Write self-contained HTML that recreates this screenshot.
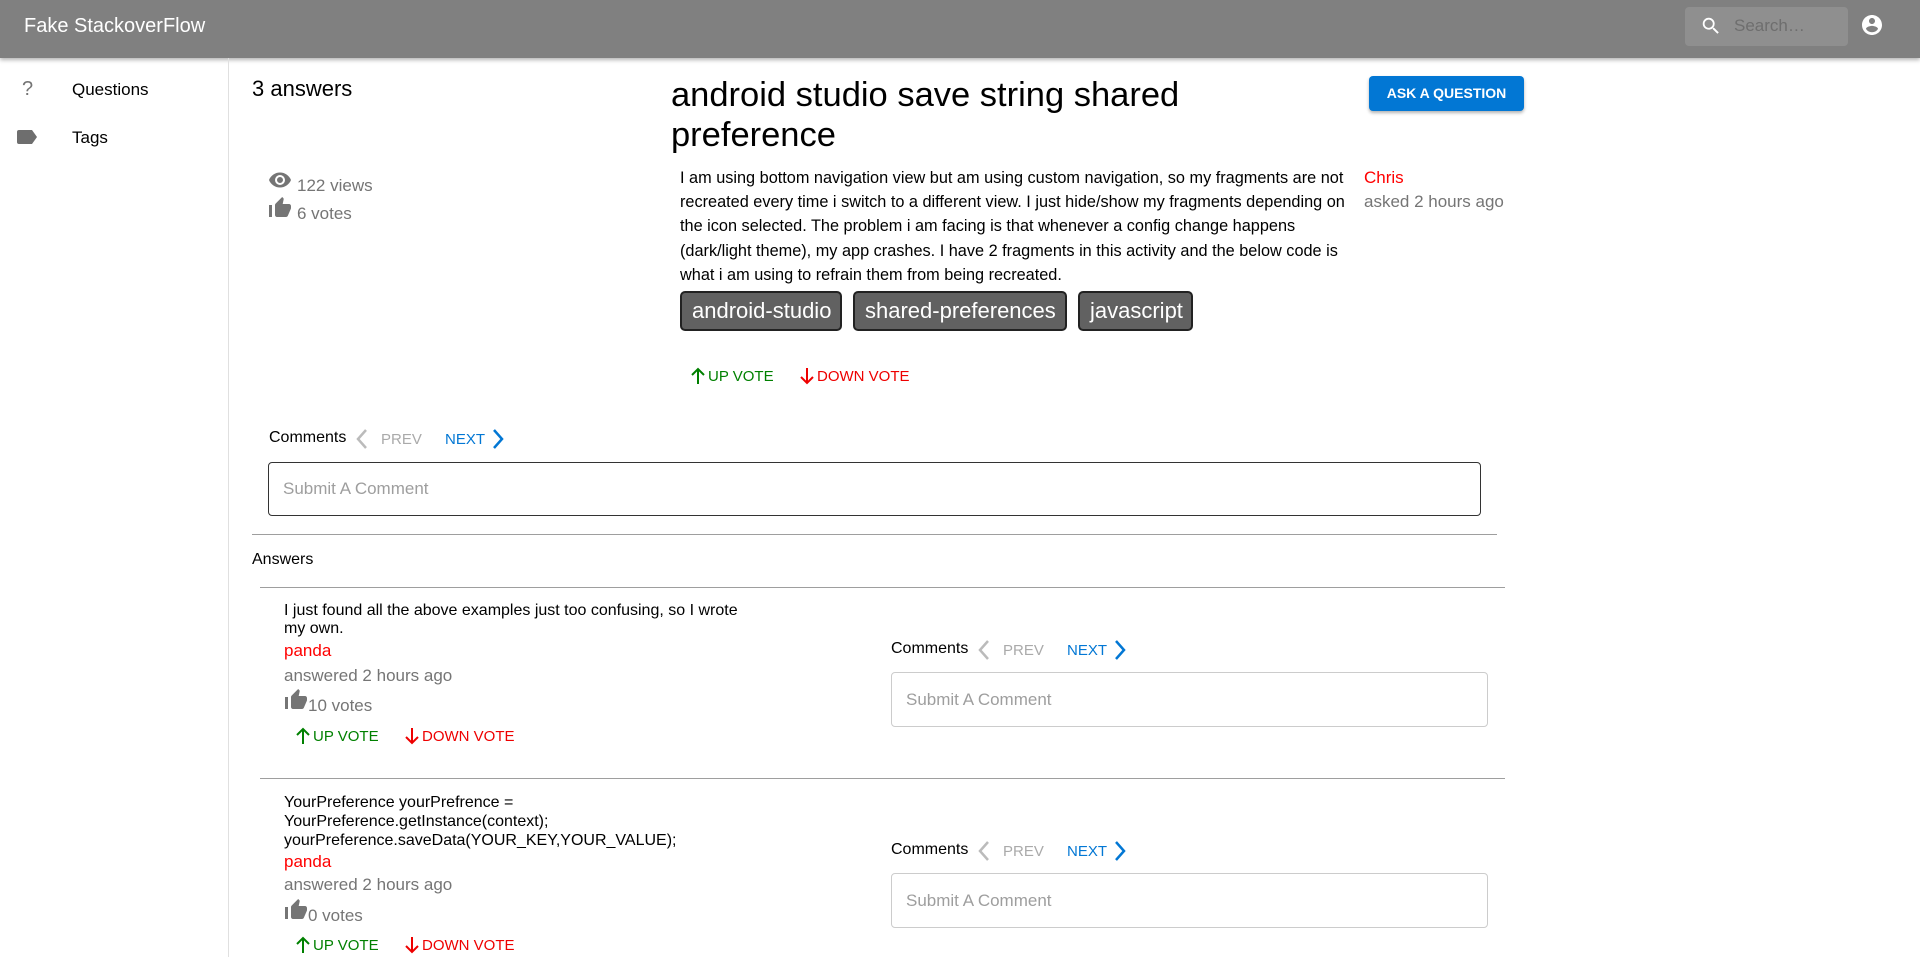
<!DOCTYPE html>
<html><head><meta charset="utf-8"><style>
*{margin:0;padding:0;box-sizing:border-box}
body{width:1920px;height:957px;overflow:hidden;background:#fff;font-family:"Liberation Sans",Arial,sans-serif;position:relative;color:#000}
.a{position:absolute;white-space:nowrap}
.hdr{position:absolute;left:0;top:0;width:1920px;height:58px;background:#808080;box-shadow:0 2px 4px rgba(0,0,0,.3)}
.side{position:absolute;left:228px;top:58px;width:1px;height:899px;background:#e0e0e0}
.tag{position:absolute;white-space:nowrap;top:291px;height:40px;background:#616161;border:2px solid #222;border-radius:5px;color:#fff;font-size:22px;line-height:36px;padding:0 10px}
.up{color:#008000;font-size:15px}
.dn{color:#e00;font-size:15px}
.up svg,.dn svg{vertical-align:-4px;margin-right:2px}
.gray{color:#757575}
.hr{position:absolute;height:1px;background:#9e9e9e}
.inp{position:absolute;border-radius:4px;color:#9e9e9e;font-size:17px;padding-left:14px}
</style></head><body>
<div class="hdr"></div>
<div class="a" style="left:24px;top:15px;font-size:20px;color:#fff">Fake StackoverFlow</div>
<div class="a" style="left:1685px;top:7px;width:163px;height:39px;background:#8f8f8f;border-radius:4px"></div>
<svg class="a" style="left:1700px;top:15px" width="22" height="22" viewBox="0 0 24 24"><path fill="#fff" d="M15.5 14h-.79l-.28-.27A6.47 6.47 0 0016 9.5 6.5 6.5 0 109.5 16c1.61 0 3.09-.59 4.23-1.57l.27.28v.79l5 4.99L20.49 19l-4.99-5zm-6 0C7.01 14 5 11.99 5 9.5S7.01 5 9.5 5 14 7.01 14 9.5 11.99 14 9.5 14z"/></svg>
<div class="a" style="left:1734px;top:16px;font-size:17px;color:#6e6e6e">Search…</div>
<svg class="a" style="left:1860px;top:13px" width="24" height="24" viewBox="0 0 24 24"><path fill="#fff" d="M12 2C6.480 2 2 6.48 2 12s4.48 10 10 10 10-4.48 10-10S17.52 2 12 2zm0 3c1.66 0 3 1.34 3 3s-1.34 3-3 3-3-1.34-3-3 1.34-3 3-3zm0 14.2a7.2 7.2 0 01-6-3.22c.03-1.99 4-3.08 6-3.08s5.970 1.09 6 3.08a7.2 7.2 0 01-6 3.22z"/></svg>

<div class="side"></div>
<div class="a" style="left:22px;top:78px;font-size:20px;color:#757575">?</div>
<div class="a" style="left:72px;top:80px;font-size:17px">Questions</div>
<svg class="a" style="left:17px;top:130px" width="22" height="14" viewBox="0 0 22 14"><path fill="#6e6e6e" d="M2 0h13l5 7-5 7H2a2 2 0 01-2-2V2a2 2 0 012-2z"/></svg>
<div class="a" style="left:72px;top:128px;font-size:17px">Tags</div>

<div class="a" style="left:252px;top:76px;font-size:22px">3 answers</div>
<svg class="a" style="left:268px;top:170px" width="24" height="20" viewBox="0 0 24 20"><path fill="#757575" d="M12 2.5C7 2.5 2.73 5.61 1 10c1.73 4.39 6 7.5 11 7.5s9.27-3.11 11-7.5c-1.73-4.39-6-7.5-11-7.5zM12 15a5 5 0 110-10 5 5 0 010 10zm0-8a3 3 0 100 6 3 3 0 000-6z"/></svg>
<div class="a gray" style="left:297px;top:176px;font-size:17px">122 views</div>
<svg class="a" style="left:268px;top:196px" width="24" height="22" viewBox="0 0 24 22"><path fill="#757575" d="M1 21h3V9H1v12zM23 10c0-1.1-.9-2-2-2h-6.3l.95-4.57.03-.32c0-.41-.17-.79-.44-1.06L14.170 1 7.59 7.59C7.22 7.95 7 8.45 7 9v10c0 1.1.9 2 2 2h9c.83 0 1.54-.5 1.84-1.22l3.02-7.05c.09-.23.14-.47.14-.73v-2z"/></svg>
<div class="a gray" style="left:297px;top:204px;font-size:17px">6 votes</div>

<div class="a" style="left:671px;top:75px;font-size:34.5px;line-height:40px">android studio save string shared<br>preference</div>
<div class="a" style="left:1369px;top:76px;width:155px;height:35px;background:#0277d4;border-radius:4px;box-shadow:0 2px 3px rgba(0,0,0,.3);color:#fff;font-size:14px;font-weight:bold;line-height:35px;text-align:center">ASK A QUESTION</div>

<div class="a" style="left:680px;top:166px;font-size:16.3px;line-height:24.2px">I am using bottom navigation view but am using custom navigation, so my fragments are not<br>recreated every time i switch to a different view. I just hide/show my fragments depending on<br>the icon selected. The problem i am facing is that whenever a config change happens<br>(dark/light theme), my app crashes. I have 2 fragments in this activity and the below code is<br>what i am using to refrain them from being recreated.</div>
<div class="a" style="left:1364px;top:168px;font-size:17px;color:#f00">Chris</div>
<div class="a gray" style="left:1364px;top:192px;font-size:17px">asked 2 hours ago</div>

<div class="tag" style="left:680px;width:162px">android-studio</div>
<div class="tag" style="left:853px;width:214px">shared-preferences</div>
<div class="tag" style="left:1078px;width:115px">javascript</div>

<div class="a up" style="left:690px;top:367px"><svg width="16" height="18" viewBox="0 0 16 18"><path d="M8 17V2M2 8l6-6 6 6" fill="none" stroke="#008000" stroke-width="2"/></svg>UP VOTE</div>
<div class="a dn" style="left:799px;top:367px"><svg width="16" height="18" viewBox="0 0 16 18"><path d="M8 1v15M2 10l6 6 6-6" fill="none" stroke="#e00" stroke-width="2"/></svg>DOWN VOTE</div>

<div class="a" style="left:269px;top:429px;font-size:16px">Comments</div>
<svg class="a" style="left:356px;top:429px" width="12" height="20" viewBox="0 0 12 20"><path d="M10 1L2 10l8 9" fill="none" stroke="#bbb" stroke-width="2.5"/></svg>
<div class="a" style="left:381px;top:431px;font-size:15px;color:#aaa">PREV</div>
<div class="a" style="left:445px;top:431px;font-size:15px;color:#0277d4">NEXT</div>
<svg class="a" style="left:492px;top:429px" width="12" height="20" viewBox="0 0 12 20"><path d="M2 1l8 9-8 9" fill="none" stroke="#0277d4" stroke-width="2.5"/></svg>
<div class="inp" style="left:268px;top:462px;width:1213px;height:54px;border:1.5px solid #333;line-height:51px">Submit A Comment</div>

<div class="hr" style="left:252px;top:534px;width:1245px"></div>
<div class="a" style="left:252px;top:551px;font-size:16px">Answers</div>
<div class="hr" style="left:260px;top:587px;width:1245px"></div>

<div class="a" style="left:284px;top:602px;font-size:16px;line-height:18px">I just found all the above examples just too confusing, so I wrote<br>my own.</div>
<div class="a" style="left:284px;top:641px;font-size:17px;color:#f00">panda</div>
<div class="a gray" style="left:284px;top:666px;font-size:17px">answered 2 hours ago</div>
<svg class="a" style="left:284px;top:688px" width="24" height="22" viewBox="0 0 24 22"><path fill="#757575" d="M1 21h3V9H1v12zM23 10c0-1.1-.9-2-2-2h-6.3l.95-4.57.03-.32c0-.41-.17-.79-.44-1.06L14.17 1 7.59 7.59C7.22 7.95 7 8.45 7 9v10c0 1.1.9 2 2 2h9c.83 0 1.54-.5 1.84-1.22l3.02-7.05c.09-.23.14-.47.14-.73v-2z"/></svg>
<div class="a gray" style="left:308px;top:696px;font-size:17px">10 votes</div>
<div class="a up" style="left:295px;top:727px"><svg width="16" height="18" viewBox="0 0 16 18"><path d="M8 17V2M2 8l6-6 6 6" fill="none" stroke="#008000" stroke-width="2"/></svg>UP VOTE</div>
<div class="a dn" style="left:404px;top:727px"><svg width="16" height="18" viewBox="0 0 16 18"><path d="M8 1v15M2 10l6 6 6-6" fill="none" stroke="#e00" stroke-width="2"/></svg>DOWN VOTE</div>

<div class="a" style="left:891px;top:640px;font-size:16px">Comments</div>
<svg class="a" style="left:978px;top:640px" width="12" height="20" viewBox="0 0 12 20"><path d="M10 1L2 10l8 9" fill="none" stroke="#bbb" stroke-width="2.5"/></svg>
<div class="a" style="left:1003px;top:642px;font-size:15px;color:#aaa">PREV</div>
<div class="a" style="left:1067px;top:642px;font-size:15px;color:#0277d4">NEXT</div>
<svg class="a" style="left:1114px;top:640px" width="12" height="20" viewBox="0 0 12 20"><path d="M2 1l8 9-8 9" fill="none" stroke="#0277d4" stroke-width="2.5"/></svg>
<div class="inp" style="left:891px;top:672px;width:597px;height:55px;border:1px solid #ccc;line-height:53px">Submit A Comment</div>

<div class="hr" style="left:260px;top:778px;width:1245px"></div>

<div class="a" style="left:284px;top:793px;font-size:16px;line-height:19px">YourPreference yourPrefrence =<br>YourPreference.getInstance(context);<br>yourPreference.saveData(YOUR_KEY,YOUR_VALUE);</div>
<div class="a" style="left:284px;top:852px;font-size:17px;color:#f00">panda</div>
<div class="a gray" style="left:284px;top:875px;font-size:17px">answered 2 hours ago</div>
<svg class="a" style="left:284px;top:898px" width="24" height="22" viewBox="0 0 24 22"><path fill="#757575" d="M1 21h3V9H1v12zM23 10c0-1.1-.9-2-2-2h-6.3l.95-4.57.03-.32c0-.41-.17-.79-.44-1.06L14.17 1 7.59 7.59C7.22 7.95 7 8.45 7 9v10c0 1.1.9 2 2 2h9c.83 0 1.54-.5 1.84-1.22l3.02-7.05c.09-.23.14-.47.14-.73v-2z"/></svg>
<div class="a gray" style="left:308px;top:906px;font-size:17px">0 votes</div>
<div class="a up" style="left:295px;top:936px"><svg width="16" height="18" viewBox="0 0 16 18"><path d="M8 17V2M2 8l6-6 6 6" fill="none" stroke="#008000" stroke-width="2"/></svg>UP VOTE</div>
<div class="a dn" style="left:404px;top:936px"><svg width="16" height="18" viewBox="0 0 16 18"><path d="M8 1v15M2 10l6 6 6-6" fill="none" stroke="#e00" stroke-width="2"/></svg>DOWN VOTE</div>

<div class="a" style="left:891px;top:841px;font-size:16px">Comments</div>
<svg class="a" style="left:978px;top:841px" width="12" height="20" viewBox="0 0 12 20"><path d="M10 1L2 10l8 9" fill="none" stroke="#bbb" stroke-width="2.5"/></svg>
<div class="a" style="left:1003px;top:843px;font-size:15px;color:#aaa">PREV</div>
<div class="a" style="left:1067px;top:843px;font-size:15px;color:#0277d4">NEXT</div>
<svg class="a" style="left:1114px;top:841px" width="12" height="20" viewBox="0 0 12 20"><path d="M2 1l8 9-8 9" fill="none" stroke="#0277d4" stroke-width="2.5"/></svg>
<div class="inp" style="left:891px;top:873px;width:597px;height:55px;border:1px solid #ccc;line-height:53px">Submit A Comment</div>
</body></html>
